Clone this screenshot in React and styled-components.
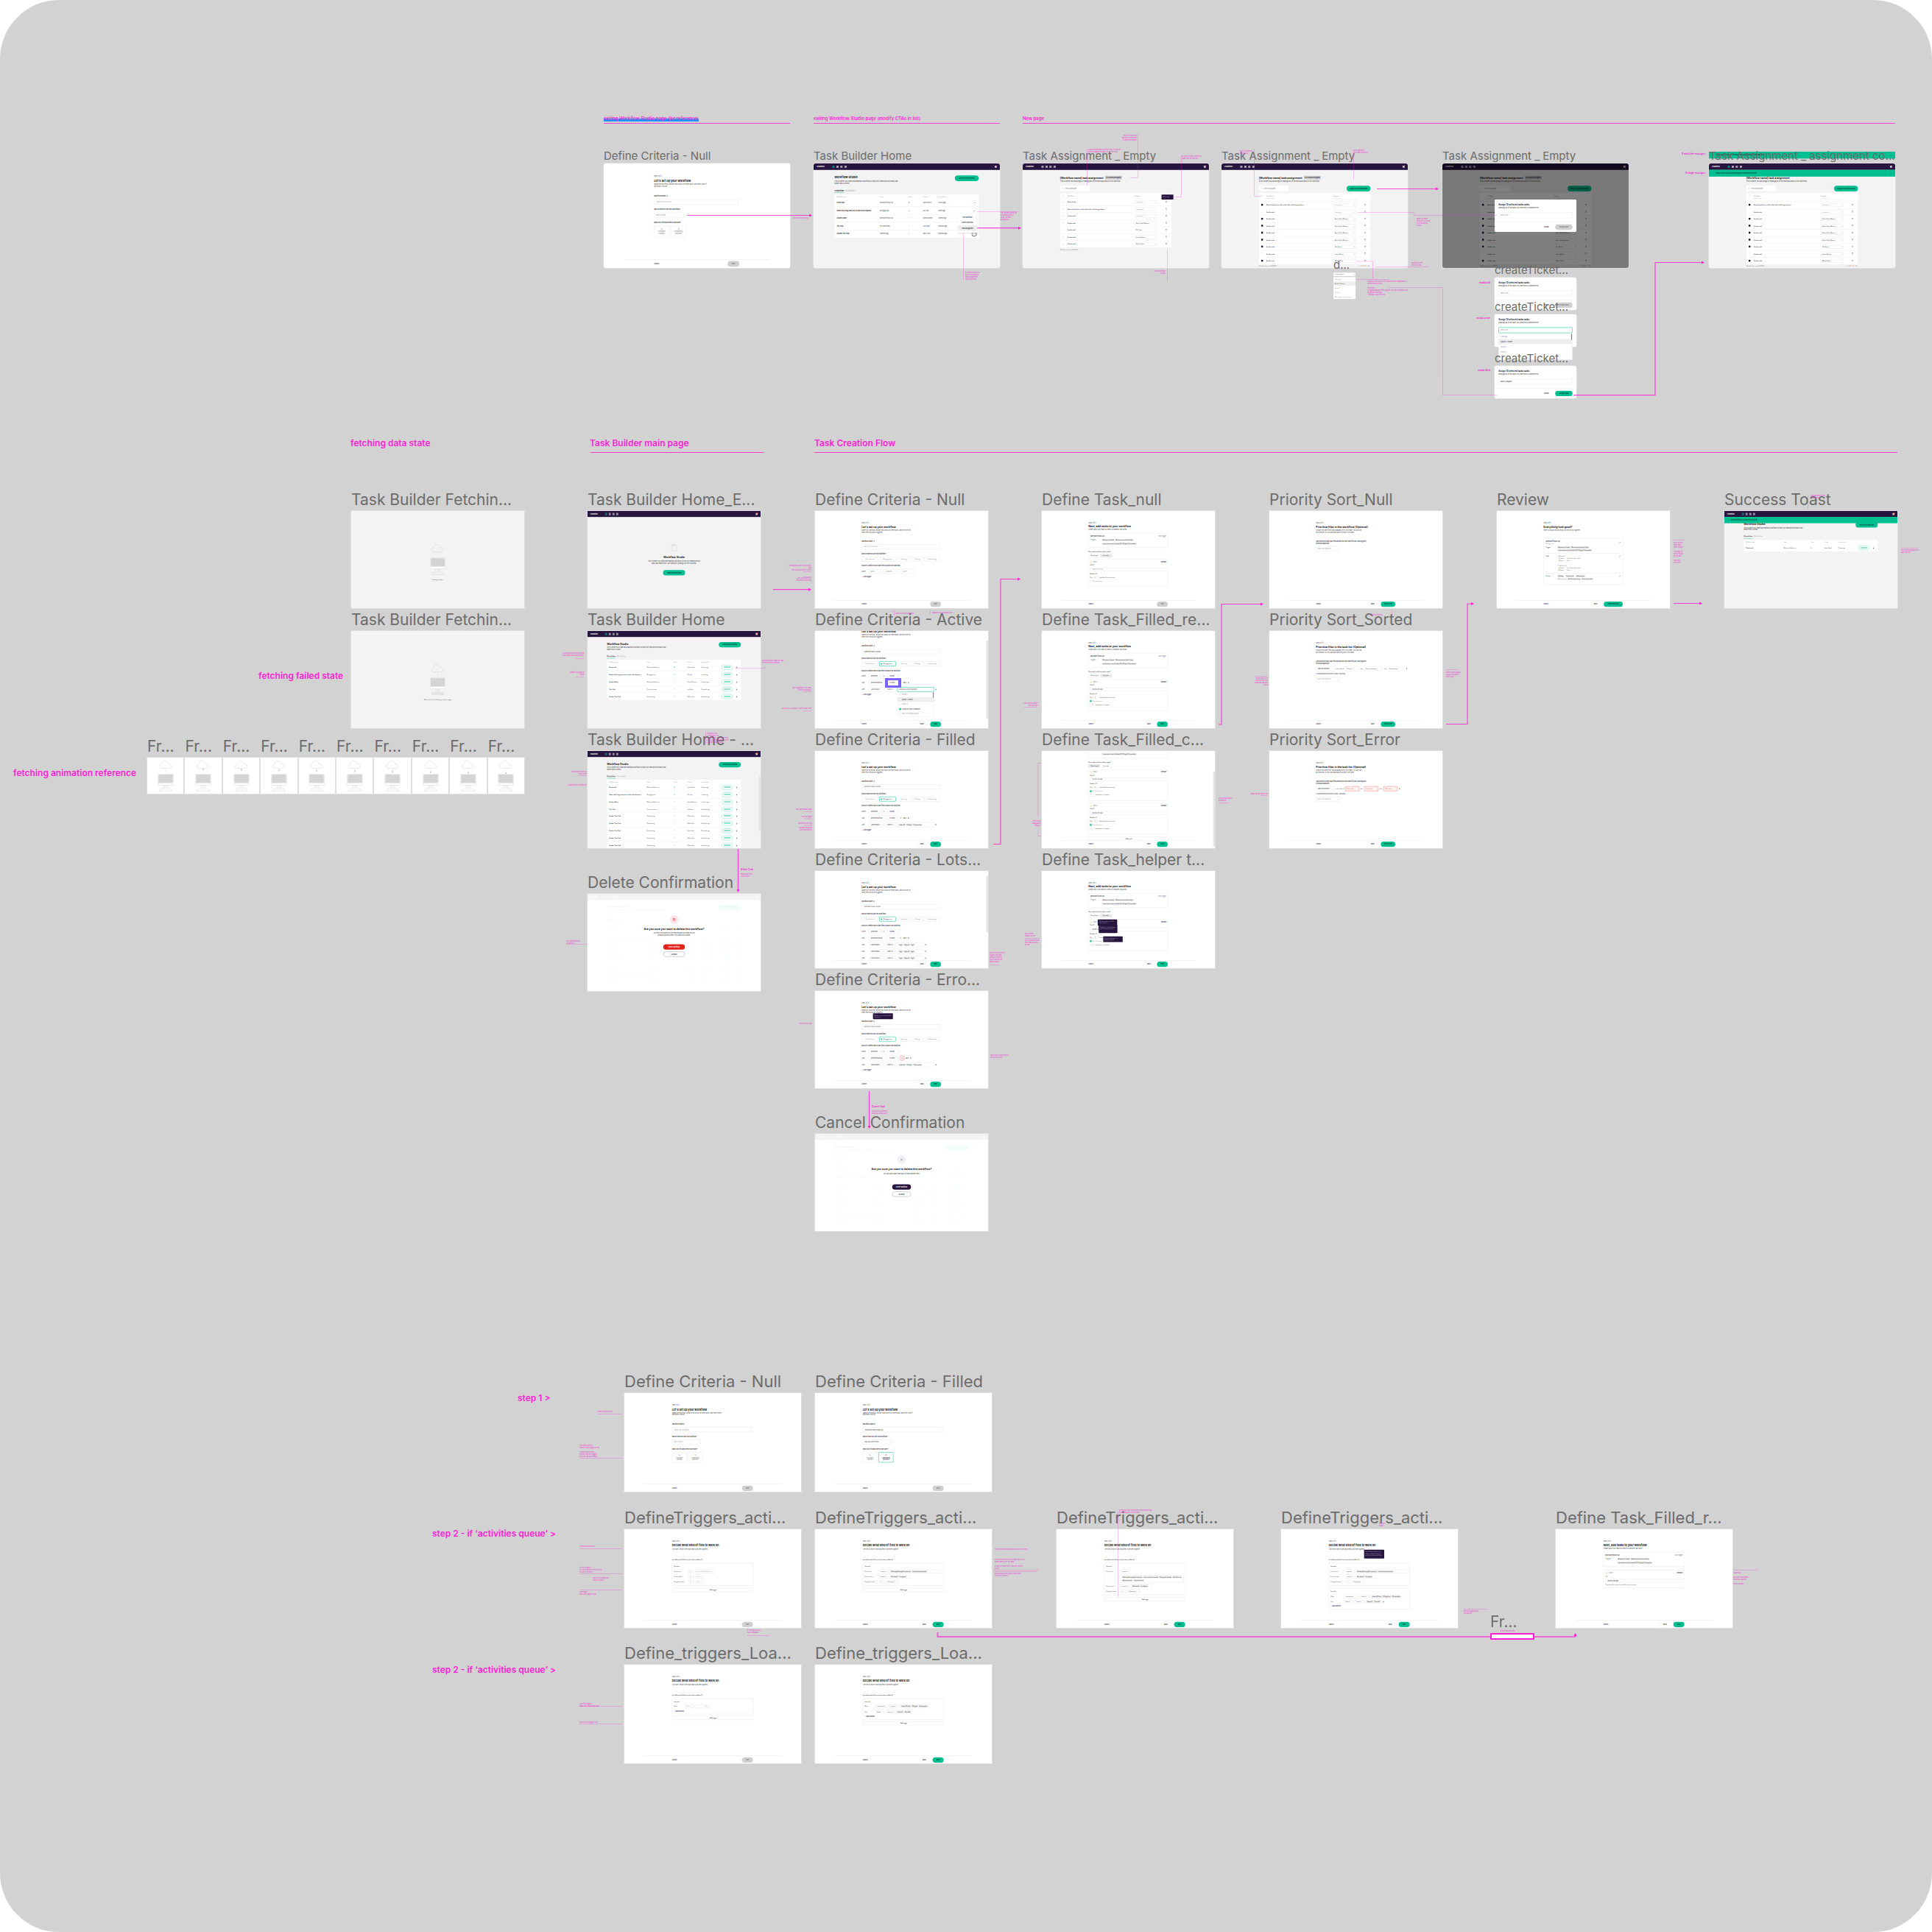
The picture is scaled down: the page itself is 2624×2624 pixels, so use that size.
import React from "react";
import styled, { createGlobalStyle, css } from "styled-components";
import { Trash2, Clipboard, Phone, ListChecks, Search, X, Pencil, Check } from "lucide-react";

const pink = "#fb1fd6";
const green = "#00bf91";
const plum = "#27153f";

const GlobalStyle = createGlobalStyle`
  * { box-sizing: border-box; }
  body { margin: 0; background: #fff; font-family: Inter, "Liberation Sans", sans-serif; }
  button, input, select { font: inherit; color: inherit; margin: 0; }
  p, h2, h3, ul { margin: 0; padding: 0; font-weight: inherit; }
`;

/* ---------- canvas ---------- */

const Canvas = styled.main`
  position: relative;
  min-height: 100vh;
  background: #d2d2d2;
  border-radius: 80px;
  overflow: hidden;
`;

const Node = styled.section`
  position: absolute;
  left: ${(p) => p.$x}px;
  top: ${(p) => p.$y}px;
  width: ${(p) => p.$w}px;
`;

const labelSizes = { s: [15, 21], m: [21, 31], l: [22, 32] };

const FrameLabel = styled.h3`
  position: absolute;
  left: 0;
  bottom: 100%;
  font-size: ${(p) => labelSizes[p.$size][0]}px;
  line-height: ${(p) => labelSizes[p.$size][1]}px;
  font-weight: 400;
  color: #6c6c6c;
  white-space: nowrap;
`;

const Viewport = styled.div`
  height: ${(p) => p.$h}px;
  border-radius: ${(p) => (p.$round ? 3 : 0)}px;
  overflow: ${(p) => (p.$open ? "visible" : "hidden")};
  background: #fff;
  box-shadow: 0 0 0 1px #dedede;
`;

const Scaled = styled.div`
  width: ${(p) => p.$base}px;
  transform: scale(${(p) => p.$scale});
  transform-origin: 0 0;
`;

const SectionTitle = styled.h2`
  position: absolute;
  left: ${(p) => p.$x}px;
  top: ${(p) => p.$y}px;
  font-size: ${(p) => (p.$small ? 6 : 12)}px;
  line-height: ${(p) => (p.$small ? 8 : 16)}px;
  font-weight: 600;
  color: ${pink};
  white-space: nowrap;
`;

const Selected = styled.span`
  display: inline-block;
  background: linear-gradient(transparent 50%, #1f93ff 50%);
`;

const Note = styled.p`
  position: absolute;
  left: ${(p) => p.$x}px;
  top: ${(p) => p.$y}px;
  width: ${(p) => p.$w}px;
  font-size: ${(p) => (p.$strong ? 3 : 2)}px;
  line-height: 3px;
  font-weight: ${(p) => (p.$strong ? 700 : 500)};
  color: ${pink};
  opacity: ${(p) => (p.$strong ? 1 : 0.75)};
  white-space: nowrap;
  display: flex;
  flex-direction: column;
  align-items: ${(p) => (p.$right ? "flex-end" : "flex-start")};
  span { min-height: 3px; }
`;

const Connectors = styled.svg`
  position: absolute;
  left: 0;
  top: 0;
  width: 2624px;
  height: 2624px;
  pointer-events: none;
`;

const Highlight = styled.div`
  position: absolute;
  left: ${(p) => p.$x}px;
  top: ${(p) => p.$y}px;
  width: ${(p) => p.$w}px;
  height: ${(p) => p.$h}px;
  border: solid ${(p) => p.$c};
  border-width: ${(p) => p.$b};
  background: ${(p) => p.$bg || "transparent"};
`;

const FilmStrip = styled(Node)`
  display: flex;
  gap: 2px;
`;

const FilmCell = styled.div`
  position: relative;
  flex: 1;
`;

const FilmView = styled.div`
  height: 49px;
  background: #fff;
  box-shadow: 0 0 0 1px #dedede;
  display: flex;
  justify-content: center;
  padding-top: 4px;
  svg { width: 22px; height: 42px; }
`;

function Frame({ x, y, w, h, label, size = "m", round, open, base = 1440, scale, children }) {
  return (
    <Node $x={x} $y={y} $w={w}>
      <Viewport $h={h} $round={round} $open={open}>
        <Scaled $base={base} $scale={scale || w / base}>{children}</Scaled>
      </Viewport>
      <FrameLabel $size={size}>{label}</FrameLabel>
    </Node>
  );
}

/* ---------- shared screen parts ---------- */

const Screen = styled.div`
  position: relative;
  display: flex;
  flex-direction: column;
  width: 1440px;
  height: 808px;
  overflow: hidden;
  background: ${(p) => (p.$gray ? "#f3f3f3" : "#fff")};
  color: #333;
  font-size: 12px;
  line-height: 16px;
`;

const Body = styled.div`
  flex: 1;
  min-height: 0;
  overflow: hidden;
`;

const Column = styled.div`
  width: 652px;
  margin-left: 388px;
  padding-top: 90px;
  margin-top: ${(p) => -(p.$scroll || 0)}px;
`;

const Title = styled.div`
  font-size: ${(p) => (p.$compact ? 20 : 22)}px;
  line-height: 32px;
  font-weight: 700;
  color: #222;
  white-space: nowrap;
`;

const StepHead = styled.header`
  display: flex;
  flex-direction: column;
  gap: ${(p) => p.$gap}px;
  margin-bottom: ${(p) => p.$after}px;
  color: #444;
`;

const Sub = styled.p`
  margin-top: ${(p) => (p.$gap === undefined ? -8 : p.$gap)}px;
  margin-bottom: ${(p) => p.$after || 0}px;
  white-space: nowrap;
`;

const Field = styled.div`
  display: flex;
  flex-direction: column;
  align-items: flex-start;
  gap: 16px;
  margin-bottom: 30px;
`;

const Caption = styled.label`
  font-weight: 600;
  font-size: ${(p) => (p.$small ? 10 : 12)}px;
  color: #333;
  white-space: nowrap;
`;

const edge = "2px solid #dcdcdc";

const Text = styled.input`
  width: 100%;
  height: ${(p) => p.$h || 40}px;
  padding: 0 16px;
  border: ${edge};
  border-radius: 4px;
  background: #fff;
  font-size: 12px;
  &::placeholder { color: #999; }
`;

const Row = styled.div`
  display: flex;
  align-items: center;
  gap: ${(p) => p.$gap || 10}px;
  margin-bottom: ${(p) => p.$after || 0}px;
  white-space: nowrap;
`;

const Word = styled.span`
  width: ${(p) => (p.$w ? p.$w + "px" : "auto")};
  flex: none;
  font-size: ${(p) => (p.$small ? 10 : 12)}px;
  font-weight: ${(p) => (p.$bold ? 600 : 400)};
  color: ${(p) => p.$c || "#444"};
`;

const PickWrap = styled.span`
  position: relative;
  flex: none;
  display: block;
  width: ${(p) => p.$w}px;
  height: ${(p) => p.$h || 40}px;
  &::after {
    content: "";
    position: absolute;
    right: 10px;
    top: calc(50% - 4px);
    width: 5px;
    height: 5px;
    border: solid #888;
    border-width: 0 1px 1px 0;
    transform: rotate(45deg);
  }
`;

const PickBox = styled.select`
  display: block;
  appearance: none;
  width: 100%;
  height: 100%;
  padding: 0 10px;
  border: ${(p) => (p.$state === "on" ? `3px solid ${green}` : p.$state === "bad" ? "3px solid #ff7a70" : edge)};
  border-radius: 4px;
  background: ${(p) => (p.$state === "bad" ? "#fff5f4" : "#fff")};
  color: ${(p) => (p.$state === "bad" ? "#e8372c" : p.$muted ? "#999" : "#333")};
  font-size: ${(p) => (p.$tiny ? 10 : 12)}px;
`;

function Pick({ w, h, value, muted, state, name, tiny }) {
  return (
    <PickWrap $w={w} $h={h}>
      <PickBox $muted={muted} $state={state} $tiny={tiny} aria-label={name || value} defaultValue={value}>
        <option>{value}</option>
      </PickBox>
    </PickWrap>
  );
}

const TagBox = styled.div`
  display: flex;
  flex-wrap: wrap;
  align-items: center;
  gap: 6px;
  width: ${(p) => (p.$w ? p.$w + "px" : "auto")};
  min-height: ${(p) => p.$h || 40}px;
  padding: 2px 10px;
  border: ${edge};
  border-radius: 4px;
`;

const Tag = styled.span`
  padding: 0 4px;
  border-radius: 2px;
  background: #e4e4e4;
  color: #333;
  font-size: 10px;
  line-height: 16px;
  white-space: nowrap;
`;

const Tags = ({ items, ...rest }) => (
  <TagBox {...rest}>{items.map((t, i) => <Tag key={i}>{t}</Tag>)}</TagBox>
);

const ChipLabel = styled.label`
  display: flex;
  align-items: center;
  gap: 8px;
  width: ${(p) => p.$w}px;
  height: 40px;
  padding: 0 10px;
  border: ${(p) => (p.$on ? `3px solid ${green}` : edge)};
  border-radius: 4px;
  font-size: 11px;
  color: ${(p) => (p.$on ? "#333" : "#777")};
`;

const Dot = styled.input`
  appearance: none;
  flex: none;
  width: 12px;
  height: 12px;
  border: 1px solid #ccc;
  border-radius: 50%;
  &:checked { background: ${green}; border-color: ${green}; }
`;

const Tick = styled.input`
  appearance: none;
  flex: none;
  width: 14px;
  height: 14px;
  border: 1px solid #bbb;
  border-radius: 2px;
  background: #fff;
  &:checked { background: ${(p) => p.$c || green}; border-color: ${(p) => p.$c || green}; }
`;

const tones = {
  go: css`background: ${green}; color: #10362c;`,
  off: css`background: #cfcfcf; color: #777;`,
  plain: css`background: #fff; color: #333; border: 2px solid #dedede;`,
  line: css`background: #fff; color: #333; border: 3px solid #a59db5;`,
  dark: css`background: ${plum}; color: #fff;`,
  stop: css`background: #e0231b; color: #fff;`,
  mint: css`background: #fff; color: ${green}; border: 3px solid #7fdcc5;`,
};

const Pill = styled.button`
  flex: none;
  width: ${(p) => p.$w}px;
  height: ${(p) => p.$h || 44}px;
  padding: 0;
  border: 0;
  border-radius: 22px;
  font-size: 12px;
  font-weight: 600;
  ${(p) => tones[p.$tone]}
`;

const TextButton = styled.button`
  padding: 0;
  border: 0;
  background: none;
  font-size: 12px;
  line-height: 16px;
  font-weight: ${(p) => (p.$soft ? 400 : 600)};
  color: ${(p) => (p.$soft ? "#777" : "#40345a")};
`;

const Foot = styled.footer`
  flex: none;
  display: flex;
  align-items: center;
  gap: 26px;
  height: 66px;
  margin: 0 160px;
  padding: 0 232px 0 228px;
  border-top: 2px solid #dcdcdc;
  background: #fff;
  > :first-child { margin-right: auto; }
`;

const ScrollThumb = styled.i`
  position: absolute;
  right: 0;
  top: ${(p) => p.$top || 42}px;
  width: 14px;
  height: ${(p) => p.$h || 468}px;
  background: #e4e4e4;
`;

const Tip = styled.div`
  position: absolute;
  left: ${(p) => p.$x}px;
  top: ${(p) => p.$y}px;
  width: ${(p) => p.$w}px;
  height: ${(p) => p.$h}px;
  padding: 10px;
  border-radius: 4px;
  background: ${plum};
  color: #b9b0c9;
  font-size: 10px;
  line-height: 14px;
`;

const Footer = ({ next = "Next", w = 90, off }) => (
  <Foot>
    <TextButton>Cancel</TextButton>
    {!off && <Pill $tone="plain" $w={84}>Back</Pill>}
    <Pill $tone={off ? "off" : "go"} $w={w}>{next}</Pill>
  </Foot>
);

const Head = ({ step, title, sub, sub2, after = 60, gap = 12, subGap = -8 }) => (
  <StepHead $after={after} $gap={gap}>
    <span>{step}</span>
    <Title>{title}</Title>
    <Sub $gap={subGap}>{sub}{sub2 && <><br />{sub2}</>}</Sub>
  </StepHead>
);

/* ---------- define criteria ---------- */

const Card = styled.label`
  display: flex;
  flex-direction: column;
  align-items: center;
  justify-content: center;
  gap: 6px;
  width: 120px;
  height: 84px;
  border: ${(p) => (p.$on ? `3px solid ${green}` : edge)};
  border-radius: 4px;
  text-align: center;
  color: ${(p) => (p.$on ? "#222" : "#777")};
  svg { width: 16px; height: 16px; }
  input { position: absolute; opacity: 0; }
`;

function StepOne({ filled }) {
  return (
    <Screen>
      <Body>
        <Column>
          <Head step="Step 1 of 4" title="Let's set up your workflow"
            sub="Name the workflow, decide who works on these tasks, and then type of" sub2="workflow it will be." />
          <Field>
            <Caption>Workflow name ⓘ</Caption>
            <Text aria-label="Workflow name" placeholder="Name your workflow" defaultValue={filled ? "Disclosure desk follow-up" : ""} />
          </Field>
          <Field>
            <Caption>Which team will use this workflow?</Caption>
            <Pick w={234} value={filled ? "Loan document desk" : "Select a team"} muted={!filled} />
          </Field>
          <Field>
            <Caption>What sort of tasks need to be done?</Caption>
            <Row>
              <Card><input type="radio" aria-label="Purchase contract" /><Phone /><span>Purchase<br />contract</span></Card>
              <Card $on={filled}><input type="radio" aria-label="Completing activities" /><ListChecks /><span>Completing<br />activities</span></Card>
            </Row>
          </Field>
        </Column>
      </Body>
      <Footer off />
    </Screen>
  );
}

const teams = [["Post-close ops", 136], ["Mortgage ops", 138], ["Servicing", 109], ["Closing", 98], ["Underwriting", 130]];

const Menu = styled.ul`
  position: absolute;
  left: ${(p) => p.$x}px;
  top: ${(p) => p.$y}px;
  width: ${(p) => p.$w}px;
  padding: 0;
  border: ${edge};
  background: #fff;
  list-style: none;
  &::after {
    content: "";
    position: absolute;
    right: 2px;
    top: 0;
    width: 6px;
    height: 46px;
    background: #777;
  }
`;

const MenuItem = styled.li`
  display: flex;
  align-items: center;
  gap: 8px;
  height: 40px;
  padding: 0 14px;
  background: ${(p) => (p.$on ? "#eeeeee" : "transparent")};
  color: ${(p) => (p.$on || p.$dark ? "#333" : "#999")};
`;

function Criteria({ mode }) {
  const empty = mode === "null";
  const bad = mode === "error";
  const tags = mode === "lots" ? ["Tag A", "Tag for B", "Tag C"] : ["Jumbo 30", "FHA gold", "VA streamline"];
  return (
    <Screen>
      <Body>
        <Column $scroll={mode === "active" ? 127 : 0}>
          <Head step="Step 1 of 3" title="Let's set up your workflow"
            sub="Name this workflow, decide who works on these tasks, and set rules for" sub2="when files should be triggered." />
          <Field>
            <Caption>Workflow name ⓘ</Caption>
            <Text aria-label="Workflow name" placeholder="Name your workflow" defaultValue={empty ? "" : "Milestone follow-up task"} />
          </Field>
          <Field>
            <Caption>Which team will use this workflow?</Caption>
            <Row>
              {teams.map(([t, w], i) => (
                <ChipLabel key={t} $w={w} $on={!empty && i === 1}>
                  <Dot type="radio" readOnly checked={!empty && i === 1} />{t}
                </ChipLabel>
              ))}
            </Row>
          </Field>
          <Field>
            <Caption>Now let's define which loan files to add to the workflow</Caption>
            {empty ? (
              <Row><Word $w={48}>When</Word><Pick w={118} value="Object" muted /><Pick w={135} value="Condition" muted /><Pick w={109} value="Value" muted /></Row>
            ) : (
              <>
                <Row><Word $w={54}>When</Word><Pick w={92} value="Milestone" /><Pick w={42} value="is" /><Pick w={98} value="Funded" /></Row>
                <Row>
                  <Word $w={54}>And</Word><Pick w={144} value="Milestone period" /><Pick w={92} value="is within" />
                  {bad ? <Pick w={34} value="0" state="bad" /> : <Word $w={16}>3</Word>}
                  <Word>days</Word><Trash2 size={12} />
                </Row>
                {mode === "active" ? (
                  <Row><Word $w={54}>And</Word><Pick w={124} value="Loan product" /><Pick w={88} value="is any of" /><Pick w={306} value="Jumbo 30 fixed streamline" state="on" /><Trash2 size={12} /></Row>
                ) : (
                  [0, 1, 2].slice(0, mode === "lots" ? 3 : 1).map((i) => (
                    <Row key={i}><Word $w={54}>And</Word><Pick w={124} value="Loan product" /><Pick w={88} value="is any of" /><Tags $w={mode === "lots" ? 220 : 306} items={tags} /><Trash2 size={12} /></Row>
                  ))
                )}
              </>
            )}
            {mode === "lots" ? <Text aria-label="More" $h={40} /> : <TextButton>+&nbsp; Add trigger</TextButton>}
          </Field>
        </Column>
      </Body>
      <Footer off={empty} />
      {(mode === "active" || mode === "lots") && <ScrollThumb $top={mode === "active" ? 80 : 42} $h={mode === "active" ? 650 : 468} />}
      {mode === "active" && (
        <Menu $x={685} $y={508} $w={306}>
          <MenuItem><Tick type="checkbox" aria-label="Option 1" />Option 1</MenuItem>
          <MenuItem $on><Tick type="checkbox" aria-label="Option 2" />Option 2 (hover)</MenuItem>
          <MenuItem><Tick type="checkbox" aria-label="Option 3" />Option 3</MenuItem>
          <MenuItem $dark><Tick type="checkbox" aria-label="Jumbo" readOnly checked />Jumbo 30 fixed streamline</MenuItem>
          <MenuItem><Tick type="checkbox" aria-label="Other" />Non-conforming product</MenuItem>
        </Menu>
      )}
      {bad && <Tip $x={482} $y={186} $w={166} $h={48}>Name it so your team can find it in the list</Tip>}
    </Screen>
  );
}

/* ---------- define task ---------- */

const Panel = styled.div`
  display: flex;
  flex-direction: column;
  gap: ${(p) => p.$gap || 14}px;
  width: 662px;
  height: ${(p) => (p.$h ? p.$h + "px" : "auto")};
  margin-bottom: ${(p) => p.$after || 18}px;
  padding: ${(p) => p.$pad || "16px 14px"};
  border: ${edge};
  border-radius: 4px;
`;

const Split = styled.div`
  display: flex;
  justify-content: space-between;
  align-items: center;
`;

const Segment = styled.div`
  display: flex;
  width: 196px;
  height: 28px;
  border: ${edge};
  border-radius: 4px;
  span { flex: 1; line-height: 24px; font-size: 10px; text-align: center; }
  span:nth-child(${(p) => p.$on}) { background: #e6e6e6; }
`;

function Summary() {
  return (
    <Panel $h={122} $gap={16} $after={26}>
      <Split><Word $bold>Milestone follow-up</Word><TextButton $soft>Edit trigger</TextButton></Split>
      <Row $gap={6}>
        <Word $w={92} $c="#888">Triggers</Word><Tag>Milestone is Funded</Tag><Tag>Milestone period within 3 days</Tag>
      </Row>
      <Row $gap={6}><Word $w={92} /><Tag>Loan product is any of Jumbo 30, FHA gold, VA streamline</Tag></Row>
    </Panel>
  );
}

function TaskCard({ on, h, n = 1 }) {
  return (
    <Panel $h={h} $gap={12} $pad="12px 10px">
      <Split><Word $c="#777">⋮⋮ Task {n}</Word><TextButton>Remove</TextButton></Split>
      <Word $small $bold>Title ⓘ</Word>
      <Text aria-label="Task title" $h={28} placeholder="Name your task" defaultValue={on ? "Review file task" : ""} />
      <Word $small $bold>Deadline ⓘ</Word>
      <Row $gap={8}><Word $small>Due</Word><Pick w={44} h={24} value="3" tiny /><Word $small>days after file enters queue</Word></Row>
      <Row $gap={8}><Tick type="checkbox" aria-label="Repeat" readOnly checked={!!on} /><Word $small $c="#888">This task repeats</Word></Row>
      {on && <Row $gap={8}><Pick w={38} h={22} value="1" tiny /><Word $small>times after it is complete</Word></Row>}
    </Panel>
  );
}

const AddBox = styled.button`
  display: block;
  width: 662px;
  height: 32px;
  border: ${edge};
  border-radius: 4px;
  background: #fff;
  font-size: 10px;
  font-weight: 600;
`;

function TaskScreen({ mode }) {
  const on = mode !== "null";
  return (
    <Screen>
      <Body>
        <Column $scroll={mode === "copy" ? 249 : 0}>
          <Head gap={6} subGap={-2} after={20} step="Step 2 of 3" title="Next, add tasks to your workflow" sub="Create tasks your team will need to complete, and when." />
          <Summary />
          {mode !== "short" && <Row $after={10}><Caption $small>How would you like the tasks in order?</Caption></Row>}
          {mode !== "short" && <Row $after={16}><Segment $on={mode === "copy" ? 1 : 2}><span>Chronological</span><span>Any order</span></Segment></Row>}
          {mode === "short" ? (
            <Panel $h={146} $gap={12}>
              <Split><Word $c="#777">⋮⋮ Task 1</Word><TextButton>Remove</TextButton></Split>
              <Word $small>Title</Word>
              <Text aria-label="Task title" $h={32} defaultValue="Review file task" />
              <Word $small>This task will be ready when the file enters the queue</Word>
            </Panel>
          ) : (
            <TaskCard on={on} h={on ? 262 : 228} />
          )}
          {mode === "copy" && <><TaskCard on h={262} n={2} /><AddBox>+ Add a task</AddBox></>}
        </Column>
      </Body>
      <Footer off={!on} />
      {mode === "copy" && <ScrollThumb $top={172} $h={620} />}
      {mode === "help" && (
        <>
          <Tip $x={465} $y={403} $w={162} $h={52}>The title is what your team sees in their list</Tip>
          <Tip $x={473} $y={448} $w={156} $h={68}>Deadlines count from when the file enters this queue</Tip>
          <Tip $x={511} $y={544} $w={162} $h={48}>Repeat a task until it is marked complete</Tip>
        </>
      )}
    </Screen>
  );
}

/* ---------- priority ---------- */

function Priority({ mode }) {
  const bad = mode === "error" ? "bad" : undefined;
  return (
    <Screen>
      <Body>
        <Column>
          <Head step="Step 3 of 3" title={mode === "null" ? "Prioritize files in the workflow (Optional)" : "Prioritize files in the task list (Optional)"}
            sub="Choose the order files should appear in for your team. You can use" sub2="any attribute, or you can leave and file priority the same." />
          <Field>
            <Caption>Add criteria to rank your files and we will sort them for you, starting with<br />the most important</Caption>
            {mode === "null" ? <Pick w={198} value="Select sort attribute" muted /> : (
              <>
                <Row>
                  <Pick w={156} value="Loan file purpose" /><Word $small>in the order of</Word>
                  <Pick w={118} value={bad ? "Select value" : "Purchase"} state={bad} tiny /><Word $small>then</Word>
                  <Pick w={bad ? 118 : 156} value={bad ? "Select value" : "Cash out refinance"} state={bad} tiny /><Word $small>then</Word>
                  <Pick w={bad ? 118 : 140} value={bad ? "Select value" : "Rate and term"} state={bad} tiny /><Trash2 size={12} />
                </Row>
                <Word>Is there another attribute to rank? (optional)</Word>
                <Pick w={198} value="Select sort attribute" muted />
              </>
            )}
          </Field>
        </Column>
      </Body>
      <Footer next="Save & next" w={120} />
    </Screen>
  );
}

/* ---------- review ---------- */

const ReviewPart = styled.div`
  display: grid;
  grid-template-columns: 98px 1fr 14px;
  padding: ${(p) => p.$pad || "16px 0"};
  border-top: ${(p) => (p.$first ? 0 : edge)};
  > div { display: flex; flex-direction: column; gap: ${(p) => p.$gap || 3}px; font-size: 10px; color: #666; }
`;

function Review() {
  return (
    <Screen>
      <Body>
        <Column>
          <Head after={56} step="Step 4 of 4" title="Everything look good?" sub="Here's a look at the workflow you've just put together." />
          <Panel $h={388} $gap={16} $pad="20px 18px">
            <Split><div><Word $bold>Milestone follow-up</Word><br /><Word $small $c="#888">Mortgage ops</Word></div><Pencil size={14} /></Split>
            <ReviewPart $first $pad="0 0 2px" $gap={7}>
              <Word $small $bold>Triggers</Word>
              <div><Row $gap={6}><Tag>Milestone is Funded</Tag><Tag>Milestone period within 3 days</Tag></Row><Row><Tag>Loan product is any of Jumbo 30, FHA gold, VA streamline</Tag></Row></div><span />
            </ReviewPart>
            <ReviewPart $pad="14px 0 0">
              <Word $small $bold>Tasks</Word>
              <div><span>1. Review file</span><span>⋮ Deadline &nbsp; &nbsp; &nbsp; &nbsp; Due 3 days after enters</span><span>⋮ Repeats &nbsp; &nbsp; &nbsp; &nbsp; &nbsp;None</span><br /><span>2. Call borrower</span><span>⋮ Deadline &nbsp; &nbsp; &nbsp; &nbsp; Due 3 days after enters</span><span>⋮ Repeats &nbsp; &nbsp; &nbsp; &nbsp; &nbsp;None</span></div><Pencil size={14} />
            </ReviewPart>
            <ReviewPart $pad="18px 0 0" $gap={6}>
              <Word $small $bold>Priority</Word>
              <div><Row $gap={16}><Tag>Purchase</Tag><Tag>Cash out refi</Tag><Tag>Rate and term</Tag></Row><Row $gap={8}>Milestone order <Tag>Sent for underwriting</Tag><Tag>Clear to close final</Tag></Row></div><Pencil size={14} />
            </ReviewPart>
          </Panel>
        </Column>
      </Body>
      <Footer next="Create workflow" w={158} />
    </Screen>
  );
}

/* ---------- workflow home ---------- */

const Bar = styled.nav`
  flex: none;
  display: flex;
  align-items: center;
  gap: 16px;
  height: 50px;
  padding: 0 24px;
  background: ${plum};
  color: #fff;
  b { width: 106px; font-size: 15px; }
`;

const AppMark = styled.i`
  width: 15px;
  height: 17px;
  border-radius: 2px;
  background: ${(p) => (p.$on ? green : "#e9e6ef")};
  box-shadow: inset 0 0 0 3px ${(p) => (p.$on ? green : "#e9e6ef")}, inset 0 0 0 5px ${plum};
`;

const Avatar = styled.i`
  position: relative;
  margin-left: auto;
  width: 16px;
  height: 16px;
  border-radius: 3px;
  background: #d9c9d4;
  &::after {
    content: "";
    position: absolute;
    right: -3px;
    top: -3px;
    width: 10px;
    height: 10px;
    border-radius: 50%;
    background: #ff4a3d;
  }
`;

const TopBar = ({ on = 0 }) => (
  <Bar>
    <b>Polarion</b>
    {[0, 1, 2, 3].map((i) => <AppMark key={i} $on={i === on} />)}
    <Avatar />
  </Bar>
);

const Toast = styled.div`
  position: absolute;
  left: 0;
  right: 0;
  top: ${(p) => (p.$loose ? 0 : 49)}px;
  display: flex;
  align-items: center;
  gap: 12px;
  height: 53px;
  padding: 0 28px;
  background: ${green};
  color: #073d30;
  font-size: 12px;
  font-weight: 600;
  > :last-child { margin-left: auto; }
`;

const Wide = styled.div`
  width: ${(p) => p.$w}px;
  margin-left: ${(p) => p.$left}px;
  padding-top: ${(p) => p.$top}px;
`;

const Between = styled.div`
  display: flex;
  justify-content: space-between;
  align-items: flex-start;
  height: ${(p) => p.$h}px;
`;

const Tabs = styled.div`
  display: flex;
  gap: 14px;
  height: 38px;
  font-size: 11px;
  a { height: 26px; color: #999; text-decoration: none; }
  a:first-child { width: 70px; color: #222; font-weight: 700; border-bottom: 4px solid #5fd3b7; white-space: nowrap; }
`;

const Grid = styled.table`
  width: 100%;
  border-collapse: collapse;
  table-layout: fixed;
  background: #fff;
  th { height: 34px; padding: 0; font-size: 10px; font-weight: 400; color: #999; text-align: left; }
  td { height: ${(p) => p.$rowH}px; padding: 0; border-top: 2px solid #e9e9e9; font-size: ${(p) => p.$f || 11}px; color: #444; overflow: hidden; white-space: nowrap; text-overflow: ellipsis; }
  td:first-child, th:first-child { padding-left: 18px; }
  td:first-child { font-weight: 600; color: #222; padding-right: 16px; }
  tr:first-child td { border-top: 0; }
`;

const Round = styled.button`
  width: 40px;
  height: 40px;
  padding: 0;
  border: ${(p) => (p.$ring ? "4px solid #333" : p.$bare ? 0 : edge)};
  border-radius: 50%;
  background: none;
  font-size: 12px;
  font-weight: 700;
`;

const homeRows = [
  ["Preset task", "Milestone follow-up", "6", "Karen Smith", "7 hours ago"],
  ["Some really long name just to show what happens…", "Mortgage ops", "4", "Billy Joe", "1 week ago"],
  ["Another Name", "Milestone follow-up", "1", "Donna Chavez", "2 weeks ago"],
  ["Test Task", "Pre-close team", "1", "Jon Snow", "3 months ago"],
  ["Another Test Task", "Underwriting", "1", "Mark John", "8 months ago"],
];

function HomeTable({ rows, pills, ring }) {
  const cols = pills ? [331, 226, 112, 115, 170, 108, 53] : [349, 224, 111, 115, 261, 55];
  return (
    <Grid $rowH={60}>
      <colgroup>{cols.map((c, i) => <col key={i} width={c} />)}</colgroup>
      <thead><tr><th>Workflow name</th><th>Team</th><th>Tasks</th><th>Creator</th><th>Last modified</th>{pills && <th />}<th /></tr></thead>
      <tbody>
        {rows.map((r, i) => (
          <tr key={i}>
            {r.map((c, j) => <td key={j}>{c}</td>)}
            {pills && <td><Pill $tone="mint" $w={92} $h={38}>Duplicate</Pill></td>}
            <td><Round aria-label="More" $bare={pills} $ring={ring && i === 4}>{pills ? "▮" : "•••"}</Round></td>
          </tr>
        ))}
      </tbody>
    </Grid>
  );
}

const Context = styled.ul`
  position: absolute;
  left: 1117px;
  top: 391px;
  width: 144px;
  padding: 4px 0 14px;
  background: #fff;
  border-radius: 4px;
  box-shadow: 0 2px 8px #0002;
  list-style: none;
  font-size: 11px;
  font-weight: 600;
  text-align: center;
  li { line-height: 42px; }
  li:last-child { background: #ececec; }
`;

function HomeBody({ toast, rows = homeRows, pills, ring }) {
  return (
    <Wide $w={1115} $left={161} $top={toast ? 44 : 42}>
      <Between $h={110}>
        <div><Title>Workflow Studio</Title><Sub $gap={6}>This is where you create and maintain workflows to help your team prioritize tasks that<br />matter most to them.</Sub></div>
        <Pill $tone="go" $w={184}>Create new workflow</Pill>
      </Between>
      <Tabs><a href="#all">All workflows</a><a href="#mine">My workflows</a></Tabs>
      <HomeTable rows={rows} pills={pills} ring={ring} />
    </Wide>
  );
}

function Home({ menu, pills, rows, toast, scroll }) {
  return (
    <Screen $gray>
      <TopBar />
      <Body><HomeBody pills={pills} rows={rows} ring={menu} toast={toast} /></Body>
      {menu && <Context><li>Edit workflow</li><li>Delete workflow</li><li>Task assignment</li></Context>}
      {toast && <Toast><Check size={14} />Milestone follow-up has been created!<X size={14} /></Toast>}
      {scroll && <ScrollThumb $top={208} $h={460} />}
    </Screen>
  );
}

const Center = styled.div`
  display: flex;
  flex-direction: column;
  align-items: center;
  gap: ${(p) => p.$gap || 14}px;
  padding-top: ${(p) => p.$top}px;
  text-align: center;
`;

const Stack = styled.div`
  display: flex;
  flex-direction: column;
  gap: 16px;
`;

function EmptyHome() {
  return (
    <Screen $gray>
      <TopBar />
      <Body>
        <Center $top={224} $gap={32}>
          <Clipboard size={62} strokeWidth={1} color="#c9c9c9" />
          <Title>Workflow Studio</Title>
          <Sub $gap={-20} $after={16}>This is where you create and maintain workflows to help your team prioritize<br />tasks that matter most. Get started by creating your first workflow.</Sub>
          <Pill $tone="go" $w={184}>Create new workflow</Pill>
        </Center>
      </Body>
    </Screen>
  );
}

/* ---------- confirmation ---------- */

const Veil = styled.div`
  position: absolute;
  inset: 0;
  background: #fffffff2;
`;

const Badge = styled.div`
  display: grid;
  place-items: center;
  width: 72px;
  height: 72px;
  border-radius: 50%;
  background: ${(p) => p.$c};
`;

function Confirm({ kind }) {
  const del = kind === "delete";
  return (
    <Screen>
      <TopBar on={9} />
      <Body><HomeBody rows={[...homeRows, ...homeRows.slice(0, 3)]} pills /></Body>
      <Veil>
        <Center $top={178} $gap={28}>
          <Badge $c={del ? "#fde6ea" : "#f1f0f5"}>{del ? <Trash2 size={26} color="#e0231b" /> : <X size={26} color={plum} />}</Badge>
          <Title>Are you sure you want to delete this workflow?</Title>
          {del
            ? <Sub $gap={-18} $after={40}>Any files in the queue will be removed and your team will not<br />be able to access them. This cannot be undone.</Sub>
            : <Sub $gap={-16} $after={54}>You can save it and come back to finish another time.</Sub>}
          <Stack>
            <Pill $tone={del ? "stop" : "dark"} $w={del ? 180 : 156}>Delete workflow</Pill>
            <Pill $tone="line" $w={del ? 180 : 156}>Go back</Pill>
          </Stack>
        </Center>
      </Veil>
    </Screen>
  );
}

/* ---------- assignment ---------- */

const CountBadge = styled.span`
  height: 28px;
  padding: 0 8px;
  border-radius: 4px;
  background: #cdcdcd;
  font-size: 12px;
  line-height: 28px;
  font-weight: 600;
`;

const SearchBox = styled.label`
  display: flex;
  align-items: center;
  gap: 10px;
  width: 230px;
  height: 42px;
  padding: 0 14px;
  background: #fff;
  border-radius: 3px;
  input { width: 160px; border: 0; padding: 0; font-size: 11px; }
`;

const Muted = styled.div`
  display: flex;
  justify-content: space-between;
  padding-top: ${(p) => p.$top || 8}px;
  font-size: 10px;
  color: #777;
`;

const Clip = styled.div`
  height: ${(p) => (p.$h ? p.$h + "px" : "auto")};
  display: flex;
  flex-direction: column;
  justify-content: flex-end;
  overflow: hidden;
  background: #fff;
`;

const people = ["Unassigned", "Unassigned", "Unassigned", "Randy Allred-Masters", "Randy Allred-Masters", "Randy Allred-Masters", "Randy Allred-Masters", "Elisa Nuevo", "Jordyn Nelson", "William Harris"];
const longName = "Name of task that is really really really really long to show it…";

function AssignTable({ rows }) {
  return (
    <Grid $rowH={54} $f={10}>
      <colgroup><col width={57} /><col width={516} /><col width={240} /><col width={49} /></colgroup>
      <tbody>
        {rows.map((r, i) => (
          <tr key={i}>
            <td><Tick type="checkbox" aria-label={"Select " + r[0]} readOnly checked={!!r[2]} $c={plum} /></td>
            <td><b>{r[0]}</b></td>
            <td><Pick w={178} h={28} value={r[1]} muted={r[1] === "Unassigned"} tiny /></td>
            <td><Clipboard size={15} /></td>
          </tr>
        ))}
      </tbody>
    </Grid>
  );
}

const HeadRow = styled.div`
  display: grid;
  grid-template-columns: 39px 516px 1fr;
  align-items: center;
  height: 42px;
  padding-left: 18px;
  background: #fff;
  border-bottom: 2px solid #eee;
  font-size: 10px;
  color: #888;
`;

const Filters = styled(Between)`
  margin: 26px 0 14px;
`;

function Assign({ full, toast, children }) {
  const rows = full
    ? people.map((p, i) => [i === 1 ? longName : "Another task", p, i !== 2 && i !== 8])
    : [["Name of task", "Unassigned"], [longName, "Unassigned"], ["Another task", "Unassigned"], ["Another task", "Randy Child-Meadow"], ["Another task", "Ella Foster"], ["Another task", "Jordyn Nielson"], ["Another task", "William Harris"]];
  return (
    <Screen $gray>
      <TopBar on={toast ? 0 : 9} />
      <Body>
        <Wide $w={863} $left={289} $top={44}>
          <Row $gap={14}><Title $compact>[Workflow name] task assignment</Title>{!toast && <CountBadge>0/10 tasks assigned</CountBadge>}</Row>
          <Sub $gap={4}>This is where you can assign or reassign all of the individual tasks in this workflow.</Sub>
          <Filters $h={44}>
            <SearchBox><Search size={12} color="#999" /><input placeholder="Filter by assignee" aria-label="Filter" /></SearchBox>
            {full && <Pill $tone="go" $w={185} $h={44}>Assign 10 selected tasks</Pill>}
          </Filters>
          <HeadRow><Tick type="checkbox" aria-label="Select all" /><span>Task Name</span><span>Assignee</span></HeadRow>
          <Clip $h={full ? 508 : 0}><AssignTable rows={rows} /></Clip>
          <Muted $top={full ? 4 : 10}><span>Workflow last saved 5:30 PM</span>{full && <span>‹ &nbsp;1 &nbsp;2 &nbsp;<b>3</b> &nbsp;4 &nbsp;5 … 10 &nbsp;›</span>}</Muted>
        </Wide>
      </Body>
      {toast && <Toast><Check size={12} />Tasks successfully been assigned to Benjamin Greene.<X size={12} /></Toast>}
      {children}
    </Screen>
  );
}

const Shade = styled.div`
  position: absolute;
  inset: 0;
  display: flex;
  justify-content: center;
  align-items: flex-start;
  padding-top: 279px;
  background: #00000080;
`;

const ModalCard = styled.div`
  position: relative;
  width: 632px;
  height: 250px;
  border-radius: 8px;
  background: #fff;
  color: #333;
  font-size: 12px;
  line-height: 16px;
`;

const ModalMain = styled.div`
  display: flex;
  flex-direction: column;
  gap: ${(p) => p.$gap || 0}px;
  height: 175px;
  padding: 28px 30px 0;
  border-bottom: 2px solid #e4e4e4;
`;

const ModalTitle = styled.div`
  font-size: 16px;
  line-height: 26px;
  font-weight: 700;
  color: #222;
`;

const ModalFoot = styled.div`
  display: flex;
  justify-content: flex-end;
  align-items: center;
  gap: 48px;
  height: 75px;
  padding-right: 30px;
`;

function Modal({ mode }) {
  return (
    <ModalCard>
      <ModalMain>
        <ModalTitle>Assign 10 selected tasks tasks</ModalTitle>
        <Sub $gap={0} $after={30}>Reassign all of the tasks you selected to someone else.</Sub>
        <Pick w={572} h={44} value={mode === "filled" ? "Robert Langdon" : "Select user"} muted={mode !== "filled"} state={mode === "active" ? "on" : undefined} />
      </ModalMain>
      <ModalFoot>
        <TextButton>Cancel</TextButton>
        <Pill $tone={mode === "filled" ? "go" : "off"} $w={134} $h={42}>Assign tasks</Pill>
      </ModalFoot>
      {mode === "active" && (
        <Menu $x={30} $y={148} $w={572}>
          <MenuItem>Unassign</MenuItem><MenuItem $on>Option 2 (hover)</MenuItem><MenuItem>Option 3</MenuItem><MenuItem>Option 4</MenuItem><MenuItem />
        </Menu>
      )}
    </ModalCard>
  );
}

const DropDemo = styled.div`
  display: flex;
  flex-direction: column;
  gap: 6px;
  width: 171px;
  font-size: 10px;
`;

const DropList = styled.ul`
  list-style: none;
  background: #fff;
  li { padding-left: 10px; line-height: 34px; color: #999; white-space: nowrap; }
  li:nth-child(2) { background: #eee; color: #333; }
`;

/* ---------- triggers ---------- */

const Rule = ({ name, op, v, tags, w = 130 }) => (
  <Row $gap={8}>
    <Word $small $w={110}>{name}</Word>
    <Pick w={op.length > 2 ? 74 : 48} h={28} value={op} tiny />
    {tags ? <Tags $h={28} $w={w} items={tags} /> : v && <Pick w={w} h={28} value={v} tiny muted={v.startsWith("Sel")} />}
  </Row>
);

function Triggers({ mode }) {
  const off = mode === "null" || mode === "loanNull";
  const t1 = ["Ordering/Shipping/Document req", "Loan verification needed"];
  const loan = mode.startsWith("loan");
  return (
    <Screen>
      <Body>
        <Column>
          <Head gap={10} subGap={-4} after={72} step="Step 2 of 3" title="Decide what kind of files to work on" sub="Use one or more rules that need to be met together." />
          <Row $after={17}><Caption $small>Let's define which files we want in this workflow ⓘ</Caption></Row>
          {loan ? (
            <Panel $after={14} $gap={16}>
              <Word $small $bold>Loan rule</Word>
              <Row $gap={8}><Word $small $w={80}>When</Word>{off ? <><Pick w={74} h={28} value="Object" tiny muted /><Pick w={60} h={28} value="is" tiny muted /><Pick w={60} h={28} value="Value" tiny muted /></> : <><Pick w={104} h={28} value="Loan product" tiny /><Pick w={74} h={28} value="is any of" tiny /><Tags $h={28} items={["Jumbo 30 fixed", "FHA gold", "VA streamline"]} /></>}</Row>
              {!off && <Row $gap={8}><Word $small $w={80}>And</Word><Pick w={74} h={28} value="Branch" tiny /><Pick w={74} h={28} value="is any of" tiny /><Tags $h={28} items={["Tampa FL", "Provo UT"]} /></Row>}
              <Row><TextButton>+ Add another</TextButton></Row>
            </Panel>
          ) : (
            <Panel>
              <Row $after={8}><Word $small $bold>Activities</Word></Row>
              {mode === "null" && <Rule name="Activity type" op="is" v="Select an activity status" w={156} />}
              {(mode === "two" || mode === "four") && <Rule name="Activity type" op="is any of" tags={t1} w={430} />}
              {mode === "three" && (
                <>
                  <Rule name="Activity type" op="is any of" />
                  <Row><Word $w={108} /><Tags $w={516} $h={60} items={[...t1, "Closing call needed", "Title follow-up", "Appraisal review", "Insurance check"]} /></Row>
                </>
              )}
              <Rule name="Activity status" op={off ? "is" : "is any of"} v={off ? "Select" : null} tags={off ? null : ["Not started", "In progress"]} w={off ? 64 : 170} />
              <Rule name="Assigned to team" op="is" v={off ? "Select" : "Closing ops"} w={off ? 64 : 104} />
            </Panel>
          )}
          {mode === "four" ? (
            <Panel>
              <Row $after={8}><Word $small $bold>Loan file</Word></Row>
              <Row $gap={8}><Word $small $w={100}>When</Word><Pick w={120} h={28} value="Loan product" tiny /><Pick w={78} h={28} value="is any of" tiny /><Tags $h={28} items={["Jumbo 30 fixed", "FHA gold std", "VA streamline"]} /></Row>
              <Row $gap={8}><Word $small $w={100}>And</Word><Pick w={78} h={28} value="Branch" tiny /><Pick w={78} h={28} value="is any of" tiny /><Tags $h={28} items={["Tampa FL", "Provo UT"]} /><Trash2 size={12} /></Row>
              <Row><TextButton>+ Add another</TextButton></Row>
            </Panel>
          ) : (
            <AddBox>+ Add trigger</AddBox>
          )}
        </Column>
      </Body>
      <Footer off={off} />
      {mode === "four" && <Tip $x={676} $y={166} $w={164} $h={72}>Each file that matches your rules is added to the queue and will stay there until done</Tip>}
    </Screen>
  );
}

/* ---------- fetching ---------- */

function FetchArt({ failed, drop }) {
  return (
    <svg viewBox="0 0 130 256" width="130" height="256" fill="none" stroke="#d4d4d4" strokeWidth="3" aria-hidden="true">
      <path d="M28 64c-24-1-24-31-2-36C28 8 48-3 64 5c12 5 16 15 16 22 16-2 28 8 28 20 0 10-8 17-18 17z" transform="translate(3 0)" />
      {failed && <path d="M60 34l10 10M70 34l-10 10" />}
      <path d="M65 66v42" strokeWidth="2" />
      {drop > 0 && <path d={`M65 ${62 + drop * 4}v12`} stroke="#999" strokeWidth="5" />}
      <rect x="2" y="112" width="126" height="92" rx="5" fill="#fff" />
      <rect x="6" y="116" width="118" height="70" fill="#d4d4d4" stroke="none" />
      <path d="M48 210h34l4 14H44z" />
      <path d="M22 234h86l8 18H14z" fill={failed ? "#e4e4e4" : "none"} />
    </svg>
  );
}

function Fetching({ failed }) {
  return (
    <Screen $gray>
      <Center $top={277} $gap={30}>
        <FetchArt failed={failed} />
        <Word $small>{failed ? "We ran into an issue fetching your data, try again" : "Fetching your data..."}</Word>
      </Center>
    </Screen>
  );
}

/* ---------- annotations ---------- */

const notes = [
  [1077, 295, 22, ["If no team is selected"]],
  [1359, 288, 24, ["Hide context button for", "workflows without", "tasks, and task", "assignment"]],
  [1311, 369, 22, ["If workflow attach in", "has no unassigned", "tasks, assignment", "cannot proceed"]],
  [1522, 183, 22, ["count of how many", "tasks in the workflow", "is already assigned"], 1],
  [1478, 202, 50, ["Large workflow that has more than 10 tasks in", "which assignments apply to the whole list"]],
  [1605, 211, 32, ["on hover tooltip 'Delete task'", "reads from the task list"]],
  [1567, 367, 16, ["last row of table", "in page"], 1],
  [1684, 204, 18, ["select all tasks on", "page not all"]],
  [1839, 203, 21, ["only appears if", "one task is selected"]],
  [1924, 296, 20, ["search by name", "of the user or team", "in the workflow,", "by role"]],
  [1917, 356, 23, ["paginate the list", "every 10 rows"]],
  [1857, 381, 59, ["dropdown that behaves the same as other dropdowns in", "the workflow screens", "", "Interaction:", "Changing assignee here updates the row immediately and", "shows success toast.", "'Unassign' clears the row"]],
  [1063, 767, 39, ["We'll always cover this when the", "first", "time that users open the file"], 1],
  [1074, 784, 28, ["user must name the", "file before continuing"], 1],
  [758, 886, 35, ["All published workflows listed", "in modified date (newest first)"], 1],
  [765, 912, 28, ["number of assigned", "tasks"], 1],
  [1035, 896, 35, ["Duplicate button makes a copy", "of the selected workflow"]],
  [1070, 933, 32, ["select applicable rule value", "from the dropdown"], 1],
  [1054, 961, 48, ["multi-select dropdown, type to search list"], 1],
  [1216, 832, 30, ["cancel returns back home"]],
  [1266, 831, 34, ["disabled until all required set"]],
  [960, 995, 41, ["Duplicate flow:", "- new row on top", "- name adds 'copy' to the end", "- toast appears when it is done", "- modified date is now"]],
  [769, 1047, 28, ["sticky table header on", "scroll of list"], 1],
  [769, 1065, 28, ["pagination not needed yet"], 1],
  [1080, 1098, 23, ["auto-generated trigger"], 1],
  [1080, 1108, 23, ["delete a trigger"], 1],
  [1080, 1117, 23, ["values become tags"], 1],
  [1080, 1123, 23, ["multiple tags wrap", "onto a second line"], 1],
  [1006, 1186, 23, ["destructive flow", "confirm first"]],
  [769, 1277, 20, ["blurred background", "on confirm"]],
  [1344, 1293, 28, ["When there are lots of", "triggers the page", "scrolls behind the", "footer and the bar", "stays in place"]],
  [1392, 1267, 20, ["hover states", "helper copy on", "", "every question mark", "icon and also label", "in card"]],
  [1079, 1386, 24, ["", "error state on blur"], 1],
  [1345, 1432, 28, ["zero is not a valid number", "show red outline"]],
  [1184, 1508, 32, ["opens this confirm for", "unsaved changes only"]],
  [1383, 954, 26, ["checked by default", "for new task"], 1],
  [1698, 920, 24, ["when a priority is", "selected the next", "dropdown appears", "in line"], 1],
  [1861, 834, 27, ["skip if not sorting"]],
  [1964, 912, 25, ["sorted values appear", "in order of priority", "left to right"]],
  [1395, 1114, 19, ["each card is", "draggable to", "reorder it"], 1],
  [1655, 1083, 24, ["add as many tasks", "as needed"]],
  [1691, 1077, 31, ["empty values show error"], 1],
  [2273, 736, 15, ["Each section", "edits inline", "when clicked", "", "Pressing the", "pencil returns", "to that step", "", "Tasks and", "sort order"]],
  [2582, 746, 28, ["new workflow appears on", "top of the list"]],
  [2459, 672, 28, ["toast dismisses after", "five seconds"]],
  [811, 1916, 30, ["helper tooltip on hover"]],
  [787, 1962, 28, ["Purchase contract:", "routes to loan trigger screen", "", "Completing activities:", "routes to activity triggers", "only one can be selected"]],
  [787, 2099, 28, ["tooltip same as above"]],
  [787, 2128, 40, ["Activity triggers:", "all rules must be met for the file", "to enter the queue"]],
  [805, 2142, 28, ["multi-select dropdown", "search enabled"]],
  [787, 2161, 28, ["Add trigger:", "adds loan triggers card"]],
  [1351, 2103, 45, ["helper tooltip describing which rules are used"]],
  [1351, 2117, 45, ["selected values shown as tags and the box", "grows when there are many"]],
  [1351, 2126, 45, ["if only one value is set, hide the remove", "button"]],
  [1351, 2136, 45, ["adding more rules opens a new panel", "under the first one"]],
  [1015, 2213, 24, ["if nothing selected", "next is disabled"]],
  [787, 2313, 36, ["Loan file triggers:", "same as in task builder flow"]],
  [787, 2338, 30, ["adds another trigger card"]],
  [1520, 2050, 51, ["when more than two values are added the tags", "wrap and push content down"]],
  [1873, 2068, 12, ["on hover", "tooltip"]],
  [1988, 2187, 30, ["second trigger group", "for loan file"]],
  [2038, 2214, 29, ["if both sets are used"]],
  [2354, 2135, 34, ["Single task:", "", "only one task allowed", "for activity queues", "", "Title is editable"]],
];

const strongNotes = [
  [2000, 383, 24, "modal null"], [2000, 431, 24, "modal active"], [2000, 502, 24, "modal filled"],
  [2277, 208, 40, "If multi-line reassign >"], [2277, 234, 40, "If single reassign >"],
];

const bold = [
  "M820 167.5H1073", "M1105 167.5H1358", "M1389 167.5H2574", "M802 614.5H1037", "M1106 614.5H2577",
  "M1349 1146.500H1359V786.500H1383", "M1655 984H1659V820.500H1713", "M1964 983.500H1993V820H2000",
  "M1002.500 1153V1209", "M1180.500 1482V1531", "M934 292.500H1100", "M1327 309.700H1384", "M1870 256.500H1950",
  "M2137 536.700H2248V356.500H2312", "M1050 800.700H1099", "M2273 819.500H2309",
];
const heavy = ["M1273.500 2217V2223H2139.500V2219"];
const faint = [
  "M1327 287.500H1383", "M1308.500 317V380", "M1535 241.500H1545.500V182", "M1476.500 203V252", "M1595 267.500H1604.500V211",
  "M1585.500 339V382", "M1713 266.500H1703.500V203", "M1838.500 203V244", "M1844 288.500H1920V292.500H2033",
  "M1868 362.500H1940", "M1842 355H1864.500V379.500M1842 379.500H1886", "M1886 390.500H1959.500V536.500H2033",
  "M1091 776.500H1102M1091 783.500H1102", "M782 894.500H793M782 919.500H793", "M998 907.500H1039V905", "M1091 939.500H1102M1091 965.500H1102",
  "M1214.500 829V836M1263.500 828V834", "M958.500 994V1010", "M785 1053.500H797", "M1092 1102.500H1103M1092 1112H1103M1092 1121H1103",
  "M769 1282.500H797", "M1344 1310.500H1357", "M1392 1274.500H1412", "M1391 960.500H1409", "M1704 918.500H1722", "M1890.500 830V836",
  "M1964 909.500H1982", "M1414 1036.500H1410V1110M1410 1127V1135.500H1414", "M1655 1090.500H1670", "M1712 1080.500H1722",
  "M2273 733.500H2288M2582 744.500H2605M2455.500 672V691", "M811 1920.500H845M787 1980.500H845M787 2103.500H845M787 2137.500H845M787 2159.500H845",
  "M1349 2132.500H1410M1349 2134.500H1408", "M1015 2221.500H1045M787 2317.500H845M787 2341.500H845", "M1518.500 2053V2169", "M1988 2185.500H2020", "M2354 2132.500H2387",
];
const heads = [[1102, 292.5], [1386, 309.7], [1953, 256.5], [2314, 356.5], [1101, 800.7], [2311, 819.5], [1385, 786.5], [1715, 820.5], [2001, 820], [1002.5, 1211, 1], [1180.5, 1532, 1], [2139.5, 2219, 2]];

const rot = [0, 90, -90];

const longList = [...homeRows.slice(0, 4), ...Array(5).fill(homeRows[4])];

export default function App() {
  const s1 = 253 / 1440;
  return (
    <>
      <GlobalStyle />
      <Canvas>
        <SectionTitle $small $x={820} $y={157}><Selected>exiting Workflow Studio page (for reference)</Selected></SectionTitle>
        <SectionTitle $small $x={1105} $y={157}>exiting Workflow Studio page (modify CTAs in list)</SectionTitle>
        <SectionTitle $small $x={1389} $y={157}>New page</SectionTitle>
        <SectionTitle $x={476} $y={594}>fetching data state</SectionTitle>
        <SectionTitle $x={801} $y={594}>Task Builder main page</SectionTitle>
        <SectionTitle $x={1106} $y={594}>Task Creation Flow</SectionTitle>
        <SectionTitle $x={351} $y={910}>fetching failed state</SectionTitle>
        <SectionTitle $x={18} $y={1042}>fetching animation reference</SectionTitle>
        <SectionTitle $x={703} $y={1891}>step 1 &gt;</SectionTitle>
        <SectionTitle $x={587} $y={2075}>step 2 - if ‘activities queue’ &gt;</SectionTitle>
        <SectionTitle $x={587} $y={2260}>step 2 - if ‘activities queue’ &gt;</SectionTitle>

        <Frame round size="s" x={820} y={222} w={253} h={142} label="Define Criteria - Null"><StepOne /></Frame>
        <Frame round size="s" x={1105} y={222} w={253} h={142} label="Task Builder Home"><Home menu /></Frame>
        <Frame round size="s" x={1389} y={222} w={253} h={142} label="Task Assignment _ Empty">
          <Assign><Tip $x={1073} $y={241} $w={92} $h={38}>Delete task</Tip></Assign>
        </Frame>
        <Frame round size="s" x={1659} y={222} w={253} h={142} label="Task Assignment _ Empty"><Assign full /></Frame>
        <Frame round size="s" x={1959} y={222} w={253} h={142} label="Task Assignment _ Empty">
          <Assign full><Shade><Modal /></Shade></Assign>
        </Frame>
        <Node $x={2321} $y={206} $w={253}>
          <Scaled $base={1440} $scale={s1}><Toast $loose><Check size={12} />Tasks successfully been assigned to Benjamin Greene and others<X size={12} /></Toast></Scaled>
        </Node>
        <Frame round size="s" x={2321} y={222} w={253} h={142} label="Task Assignment _ assignment co..."><Assign full toast /></Frame>

        <Node $x={1811} $y={370} $w={30}>
          <Scaled $base={171} $scale={s1}>
            <DropDemo>
              <Pick w={171} h={30} value="Jordyn Nelson" tiny />
              <DropList><li>Unassign</li><li>Option 2 (hover)</li><li>Option 3</li><li>Option 4</li><li>Max number of characters</li></DropList>
            </DropDemo>
          </Scaled>
          <FrameLabel $size="s">d...</FrameLabel>
        </Node>

        <Frame round size="s" base={632} scale={s1} x={2030} y={377} w={111} h={44} label="createTicket..."><Modal /></Frame>
        <Frame round open size="s" base={632} scale={s1} x={2030} y={427} w={111} h={44} label="createTicket..."><Modal mode="active" /></Frame>
        <Frame round size="s" base={632} scale={s1} x={2030} y={497} w={111} h={44} label="createTicket..."><Modal mode="filled" /></Frame>

        <Frame x={477} y={694} w={235} h={132} label="Task Builder Fetchin..."><Fetching /></Frame>
        <Frame x={477} y={857} w={235} h={132} label="Task Builder Fetchin..."><Fetching failed /></Frame>
        <FilmStrip $x={200} $y={1029} $w={512}>
          {Array.from({ length: 10 }, (_, i) => (
            <FilmCell key={i}><FilmView><FetchArt drop={i} /></FilmView><FrameLabel $size="m">Fr...</FrameLabel></FilmCell>
          ))}
        </FilmStrip>

        <Frame x={798} y={694} w={235} h={132} label="Task Builder Home_E..."><EmptyHome /></Frame>
        <Frame x={798} y={857} w={235} h={132} label="Task Builder Home"><Home pills rows={homeRows} /></Frame>
        <Frame x={798} y={1020} w={235} h={132} label="Task Builder Home - ..."><Home pills rows={longList} scroll /></Frame>
        <Frame x={798} y={1214} w={235} h={132} label="Delete Confirmation"><Confirm kind="delete" /></Frame>

        <Frame x={1107} y={694} w={235} h={132} label="Define Criteria - Null"><Criteria mode="null" /></Frame>
        <Frame x={1107} y={857} w={235} h={132} label="Define Criteria - Active"><Criteria mode="active" /></Frame>
        <Frame x={1107} y={1020} w={235} h={132} label="Define Criteria - Filled"><Criteria mode="filled" /></Frame>
        <Frame x={1107} y={1183} w={235} h={132} label="Define Criteria - Lots..."><Criteria mode="lots" /></Frame>
        <Frame x={1107} y={1346} w={235} h={132} label="Define Criteria - Erro..."><Criteria mode="error" /></Frame>
        <Frame x={1107} y={1540} w={235} h={132} label="Cancel Confirmation"><Confirm kind="cancel" /></Frame>

        <Frame x={1415} y={694} w={235} h={132} label="Define Task_null"><TaskScreen mode="null" /></Frame>
        <Frame x={1415} y={857} w={235} h={132} label="Define Task_Filled_re..."><TaskScreen mode="filled" /></Frame>
        <Frame x={1415} y={1020} w={235} h={132} label="Define Task_Filled_c..."><TaskScreen mode="copy" /></Frame>
        <Frame x={1415} y={1183} w={235} h={132} label="Define Task_helper t..."><TaskScreen mode="help" /></Frame>

        <Frame x={1724} y={694} w={235} h={132} label="Priority Sort_Null"><Priority mode="null" /></Frame>
        <Frame x={1724} y={857} w={235} h={132} label="Priority Sort_Sorted"><Priority mode="sorted" /></Frame>
        <Frame x={1724} y={1020} w={235} h={132} label="Priority Sort_Error"><Priority mode="error" /></Frame>

        <Frame x={2033} y={694} w={235} h={132} label="Review"><Review /></Frame>
        <Frame x={2342} y={694} w={235} h={132} label="Success Toast"><Home pills toast rows={homeRows.slice(0, 1)} /></Frame>

        <Frame size="l" x={848} y={1892} w={240} h={134} label="Define Criteria - Null"><StepOne /></Frame>
        <Frame size="l" x={1107} y={1892} w={240} h={134} label="Define Criteria - Filled"><StepOne filled /></Frame>
        <Frame size="l" x={848} y={2077} w={240} h={134} label="DefineTriggers_acti..."><Triggers mode="null" /></Frame>
        <Frame size="l" x={1107} y={2077} w={240} h={134} label="DefineTriggers_acti..."><Triggers mode="two" /></Frame>
        <Frame size="l" x={1435} y={2077} w={240} h={134} label="DefineTriggers_acti..."><Triggers mode="three" /></Frame>
        <Frame size="l" x={1740} y={2077} w={240} h={134} label="DefineTriggers_acti..."><Triggers mode="four" /></Frame>
        <Frame size="l" x={2113} y={2077} w={240} h={134} label="Define Task_Filled_r..."><TaskScreen mode="short" /></Frame>
        <Frame size="l" x={848} y={2261} w={240} h={134} label="Define_triggers_Loa..."><Triggers mode="loanNull" /></Frame>
        <Frame size="l" x={1107} y={2261} w={240} h={134} label="Define_triggers_Loa..."><Triggers mode="loan" /></Frame>

        <Highlight $x={1202} $y={921} $w={22} $h={13} $b="3px 4px" $c="#7b61ff" />

        <Connectors viewBox="0 0 2624 2624" fill="none" stroke={pink} aria-hidden="true">
          <g strokeWidth="1.2" opacity="0.8">{bold.map((d) => <path key={d} d={d} />)}</g>
          <g strokeWidth="2" opacity="0.6">{heavy.map((d) => <path key={d} d={d} />)}</g>
          <g strokeWidth="1" opacity="0.25">{faint.map((d) => <path key={d} d={d} />)}</g>
          <g fill={pink} stroke="none">
            {heads.map(([x, y, r], i) => <path key={i} d="M-3-2L1 0L-3 2Z" transform={`translate(${x} ${y}) rotate(${rot[r || 0]})`} />)}
          </g>
        </Connectors>

        <Node $x={2024} $y={2218} $w={60}>
          <Highlight $x={0} $y={0} $w={60} $h={9} $b="2px" $c={pink} $bg="#fff" />
          <FrameLabel $size="m">Fr...</FrameLabel>
        </Node>

        {notes.map(([x, y, w, lines, right], i) => (
          <Note key={i} $x={x} $y={y} $w={w} $right={!!right}>{lines.map((l, j) => <span key={j}>{l}</span>)}</Note>
        ))}
        {strongNotes.map(([x, y, w, t]) => <Note key={t} $strong $right $x={x} $y={y} $w={w}><span>{t}</span></Note>)}
        <Note $strong $x={1006} $y={1180} $w={30}><span>Delete Task</span></Note>
        <Note $strong $x={1184} $y={1502} $w={30}><span>Cancel Task</span></Note>
      </Canvas>
    </>
  );
}
